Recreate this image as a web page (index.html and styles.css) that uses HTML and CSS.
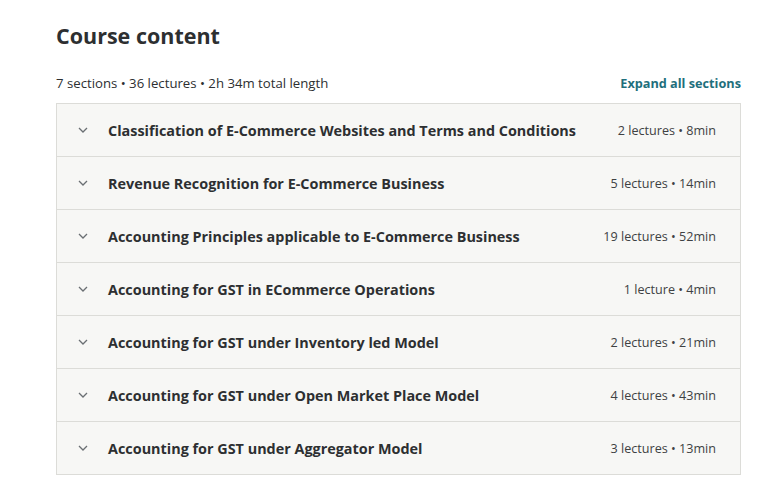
FILE: index.html
```html
<!DOCTYPE html>
<html>
<head>
  <title>Course content</title>
  <link rel="stylesheet" href="styles.css">
</head>
<body>
  <div class="course">
    <h2>Course content</h2>

    <div class="summary">
      <span>7 sections • 36 lectures • 2h 34m total length</span>
      <a href="#" class="expand">Expand all sections</a>
    </div>

    <ul class="sections">
      <li>
        <svg class="chev" width="10" height="6" viewBox="0 0 10 6"><path d="M1 1l4 4 4-4" fill="none" stroke="#6a6f73" stroke-width="1.3"/></svg>
        <span class="title">Classification of E-Commerce Websites and Terms and Conditions</span>
        <span class="meta">2 lectures • 8min</span>
      </li>
      <li>
        <svg class="chev" width="10" height="6" viewBox="0 0 10 6"><path d="M1 1l4 4 4-4" fill="none" stroke="#6a6f73" stroke-width="1.3"/></svg>
        <span class="title">Revenue Recognition for E-Commerce Business</span>
        <span class="meta">5 lectures • 14min</span>
      </li>
      <li>
        <svg class="chev" width="10" height="6" viewBox="0 0 10 6"><path d="M1 1l4 4 4-4" fill="none" stroke="#6a6f73" stroke-width="1.3"/></svg>
        <span class="title">Accounting Principles applicable to E-Commerce Business</span>
        <span class="meta">19 lectures • 52min</span>
      </li>
      <li>
        <svg class="chev" width="10" height="6" viewBox="0 0 10 6"><path d="M1 1l4 4 4-4" fill="none" stroke="#6a6f73" stroke-width="1.3"/></svg>
        <span class="title">Accounting for GST in ECommerce Operations</span>
        <span class="meta">1 lecture • 4min</span>
      </li>
      <li>
        <svg class="chev" width="10" height="6" viewBox="0 0 10 6"><path d="M1 1l4 4 4-4" fill="none" stroke="#6a6f73" stroke-width="1.3"/></svg>
        <span class="title">Accounting for GST under Inventory led Model</span>
        <span class="meta">2 lectures • 21min</span>
      </li>
      <li>
        <svg class="chev" width="10" height="6" viewBox="0 0 10 6"><path d="M1 1l4 4 4-4" fill="none" stroke="#6a6f73" stroke-width="1.3"/></svg>
        <span class="title">Accounting for GST under Open Market Place Model</span>
        <span class="meta">4 lectures • 43min</span>
      </li>
      <li>
        <svg class="chev" width="10" height="6" viewBox="0 0 10 6"><path d="M1 1l4 4 4-4" fill="none" stroke="#6a6f73" stroke-width="1.3"/></svg>
        <span class="title">Accounting for GST under Aggregator Model</span>
        <span class="meta">3 lectures • 13min</span>
      </li>
    </ul>
  </div>
</body>
</html>
```

FILE: styles.css
```css
body {
  margin: 0;
  background-color: #fff;
  font-family: "Open Sans", Arial, sans-serif;
  color: #2d2f31;
}

.course {
  width: 685px;
  margin-left: 56px;
  padding-top: 20px;
}

h2 {
  margin: 0 0 22px 0;
  font-size: 21.5px;
  font-weight: 700;
  line-height: 32px;
  color: #2d2f31;
}

.summary {
  display: flex;
  justify-content: space-between;
  align-items: center;
  font-size: 13.2px;
  color: #2d2f31;
  margin-bottom: 11px;
}

.expand {
  color: #1f6f7c;
  font-weight: 700;
  font-size: 12.7px;
  text-decoration: none;
}

.sections {
  list-style: none;
  margin: 0;
  padding: 0;
  border: 1px solid #dcdcd8;
}

.sections li {
  display: flex;
  align-items: center;
  height: 52px;
  padding: 0 24px 0 21px;
  background-color: #f7f7f5;
  border-bottom: 1px solid #dcdcd8;
}

.sections li:last-child {
  border-bottom: none;
}

.chev {
  flex: none;
  margin-right: 20px;
}

.title {
  flex: 1;
  font-size: 14.4px;
  font-weight: 700;
  color: #2d2f31;
}

.meta {
  font-size: 12.6px;
  color: #3e4143;
}
```
